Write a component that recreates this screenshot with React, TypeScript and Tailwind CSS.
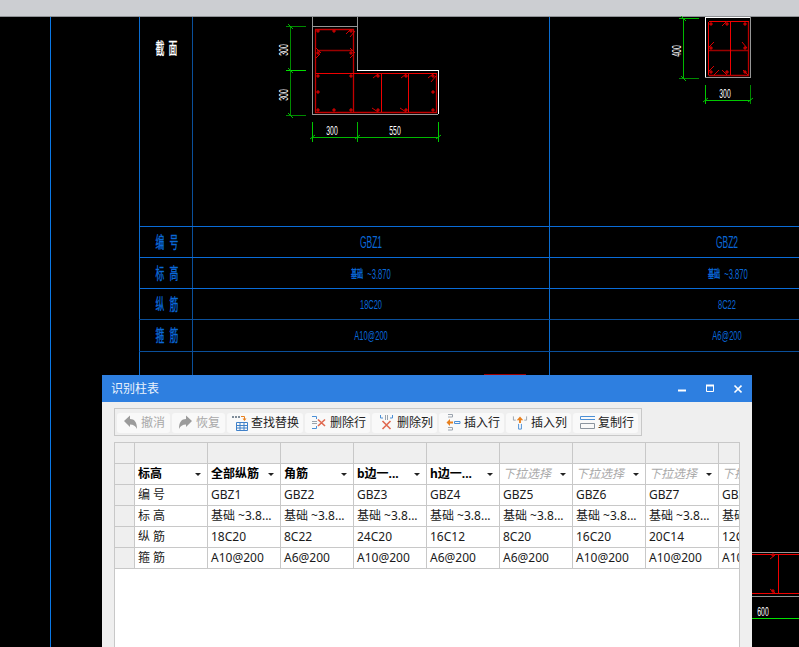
const CJK = "font-['Noto_Sans','Noto_Sans_CJK_SC',sans-serif]";

const rebarDots: [number, number][] = [
  [318, 31], [334, 31], [351, 31], [318, 53], [351, 53], [318, 76], [351, 76], [318, 92],
  [318, 110], [334, 110], [351, 110], [378, 76], [406, 76], [433, 76], [433, 92], [378, 110],
  [406, 110], [433, 110], [711, 24], [727, 24], [745, 24], [711, 48], [745, 48], [711, 72],
  [727, 72], [745, 72], [773, 555], [773, 591],
];

const rebarHooks: [number, number, number, number][] = [
  [346, 34, 351, 29], [350, 37, 355, 31], [316, 58, 320, 54], [316, 48, 321, 53], [350, 58, 354, 54],
  [350, 48, 355, 53], [373, 78, 378, 74], [401, 78, 406, 74], [428, 78, 433, 74], [431, 82, 436, 76],
  [372, 108, 378, 112], [400, 108, 406, 112], [722, 26, 727, 21], [709, 47, 714, 42], [742, 42, 747, 48],
  [709, 71, 714, 66], [714, 75, 719, 70], [722, 70, 727, 75], [743, 70, 748, 75], [770, 559, 775, 555],
  [770, 589, 775, 593],
];

// narrow CAD lettering, squeezed like the drawing's shx font
function CadText({ x, y, text, size = 12.5, sx = 0.55, rotate = 0, className = "fill-white" }: {
  x: number; y: number; text: string; size?: number; sx?: number; rotate?: number; className?: string;
}) {
  return (
    <text
      transform={`translate(${x} ${y}) rotate(${rotate}) scale(${sx} 1)`}
      textAnchor="middle"
      fontSize={size}
      className={`${className} font-['Liberation_Sans','Noto_Sans_CJK_SC',sans-serif]`}
    >
      {text}
    </text>
  );
}

function CadDrawing() {
  const blue = "fill-[#0a68d8]";
  const blueBold = "fill-[#0a68d8] stroke-[#0a68d8] [stroke-width:0.4px]";
  const whiteBold = "fill-white stroke-white [stroke-width:0.4px]";
  return (
    <svg className="absolute left-0 top-0" width="799" height="647" viewBox="0 0 799 647" fill="none" shapeRendering="crispEdges">
      {/* frame lines */}
      <g strokeWidth="1">
        <path d="M50.5 17V647" stroke="#0a78e6" />
        <path d="M139.500 17V375" stroke="#0a6cd0" />
        <path d="M192.500 17V375" stroke="#0a4f9a" />
        <path d="M549.500 17V375" stroke="#0a6cd0" />
        <path d="M139 226.500H799M139 257.500H799M139 288.500H799" stroke="#0a6cd8" />
        <path d="M139 319.500H799M139 351.500H799" stroke="#0a4f9a" />
      </g>

      {/* L shaped column outline */}
      <path d="M312.500 17V114.500H438M312 26.500H357.500M357.500 17V70" stroke="#969696" strokeWidth="1" />
      <path d="M357 70.500H438.500V114" stroke="#ffffff" strokeWidth="1" />
      <g shapeRendering="auto">
        <path d="M315.500 29V112.500H436.500V73.500M315 29.500H353.500V112" stroke="#c40000" strokeWidth="1.300" />
        <path d="M317 50.500H353" stroke="#9a0000" strokeWidth="1.500" />
        <path d="M708.500 75.500H748.500V21.500" stroke="#b80000" strokeWidth="1.300" />
        <path d="M709 50.500H748" stroke="#9a0000" strokeWidth="1.500" />
      </g>
      <path d="M315.500 73.500H436.500M381.500 74V112M408.500 74V112" stroke="#f00000" strokeWidth="1" />

      {/* rectangular column outline */}
      <path d="M705.500 77V17.500H750" stroke="#ffffff" strokeWidth="1" />
      <path d="M705 77.500H750.500V17" stroke="#969696" strokeWidth="1" />
      <path d="M708.500 21.500H748.500M730.500 22V75M708.500 21.500V75" stroke="#f00000" strokeWidth="1" />

      {/* bit of the next column, right of the dialog */}
      <path d="M752 552.500H799M752 596.500H799" stroke="#969696" strokeWidth="1" />
      <path d="M752 554.500H799M752 593.500H799M778.500 554V593" stroke="#f00000" strokeWidth="1" />
      <path d="M752 618.500H799" stroke="#00e000" strokeWidth="1" />
      <path d="M484 374.500H526" stroke="#a00000" strokeWidth="1" />

      <g shapeRendering="auto" stroke="#d80000" strokeWidth="1">
        {rebarDots.map(([cx, cy]) => (
          <circle key={`${cx}-${cy}`} cx={cx} cy={cy} r="1.200" fill="#900000" />
        ))}
        {rebarHooks.map(([x1, y1, x2, y2]) => (
          <line key={`${x1}-${y1}`} x1={x1} y1={y1} x2={x2} y2={y2} />
        ))}
      </g>

      {/* dimensions */}
      <g strokeWidth="1">
        <path d="M290.500 26V115M286 26.500H306M286 115.500H306" stroke="#008a00" />
        <path d="M286 70.500H306" stroke="#00e000" />
        <path d="M312 137.500H438M357.500 122V142" stroke="#00b800" />
        <path d="M312.500 122V142M438.500 122V142" stroke="#00c800" />
        <path d="M683.500 18V78M679 18.500H699" stroke="#00b800" />
        <path d="M679 78.500H699" stroke="#008a00" />
        <path d="M705 100.500H750M705.500 85V104" stroke="#00c800" />
        <path d="M750.500 85V104" stroke="#008a00" />
      </g>
      <g shapeRendering="auto" stroke="#00c000" strokeWidth="1">
        <path d="M288 24L293 29M288 68L293 73M288 113L293 118M310 139L315 135M355 139L360 135M436 139L441 135M681 16L686 21M681 76L686 81M703 102L708 98M748 102L753 98" />
      </g>
      <CadText x={288} y={50} text="300" rotate={-90} />
      <CadText x={288} y={95} text="300" rotate={-90} />
      <CadText x={332} y={135} text="300" />
      <CadText x={395} y={135} text="550" />
      <CadText x={681} y={51} text="400" rotate={-90} />
      <CadText x={725} y={98} text="300" />
      <CadText x={763} y={616} text="600" />

      {/* table labels */}
      <CadText x={160} y={54} text="截" size={16} sx={0.55} className={whiteBold} />
      <CadText x={173} y={54} text="面" size={16} sx={0.55} className={whiteBold} />
      {[
        ["编", "号", 248],
        ["标", "高", 279],
        ["纵", "筋", 310],
        ["箍", "筋", 341],
      ].map(([a, b, y]) => (
        <g key={String(y)}>
          <CadText x={160} y={Number(y)} text={String(a)} size={16} sx={0.55} className={blueBold} />
          <CadText x={174} y={Number(y)} text={String(b)} size={16} sx={0.55} className={blueBold} />
        </g>
      ))}
      <CadText x={371} y={248} text="GBZ1" size={17} sx={0.5} className={blue} />
      <CadText x={727} y={248} text="GBZ2" size={17} sx={0.5} className={blue} />
      <CadText x={357} y={278} text="基础" size={11} sx={0.55} className={blueBold} />
      <CadText x={379} y={279} text="~3.870" size={14} sx={0.55} className={blue} />
      <CadText x={714} y={278} text="基础" size={11} sx={0.55} className={blueBold} />
      <CadText x={736} y={279} text="~3.870" size={14} sx={0.55} className={blue} />
      <CadText x={371} y={309} text="18C20" size={12.5} sx={0.6} className={blue} />
      <CadText x={727} y={309} text="8C22" size={12.5} sx={0.6} className={blue} />
      <CadText x={371} y={340} text="A10@200" size={12.5} sx={0.6} className={blue} />
      <CadText x={727} y={340} text="A6@200" size={12.5} sx={0.6} className={blue} />
    </svg>
  );
}

const UndoIcon = ({ flip = false }: { flip?: boolean }) => (
  <svg width="15" height="15" viewBox="0 0 15 15" className={flip ? "-scale-x-100" : ""}>
    <path d="M1 6 7 .5V4c4.500 0 7 3 7 10-1.300-3-3.500-4.500-7-4.500V12z" fill="#9b9b9b" />
  </svg>
);

const ReplaceIcon = () => (
  <svg width="16" height="16" viewBox="0 0 16 16" fill="none">
    <path d="M0 1h2v2H0zM3 1h2v2H3zM6 1h2v2H6z" fill="#7f8c99" />
    <path d="M9 1.500h3.500V4" stroke="#e8801e" />
    <path d="M10.500 3.500h4l-2 2.500z" fill="#e8801e" />
    <path d="M4.500 7.500h11v8h-11zM4.500 10.500h11M4.500 13h11M8 8v7M12 8v7" stroke="#3f80c8" />
  </svg>
);

const DeleteRowIcon = () => (
  <svg width="15" height="15" viewBox="0 0 15 15" fill="none">
    <path d="M0 1.500H4.500V4M0 13.500H4.500V11" stroke="#4b8fd6" />
    <path d="M0 6.500h5M0 8.500h5" stroke="#9aa3ad" />
    <path d="M6 4.500 13 11M13 4.500 6 11" stroke="#e0684f" strokeWidth="1.600" />
  </svg>
);

const DeleteColIcon = () => (
  <svg width="15" height="15" viewBox="0 0 15 15" fill="none">
    <path d="M1.500 0v3H4M13.500 0v3H11" stroke="#4b8fd6" />
    <path d="M6.500 0v5M8.500 0v5" stroke="#9aa3ad" />
    <path d="M3.500 6 11.500 14M11.500 6 3.500 14" stroke="#e0684f" strokeWidth="1.600" />
  </svg>
);

const InsertRowIcon = () => (
  <svg width="15" height="17" viewBox="0 0 15 17" fill="none">
    <path d="M2 .5h4.500V3H2M2 13.500h4.500V16H2" stroke="#9aa3ad" />
    <path d="M3 8.500h4" stroke="#e8801e" strokeWidth="2" />
    <path d="M4 5v7L.5 8.500z" fill="#e8801e" />
    <path d="M8.500 7.500h5.500v2H8.500z" stroke="#4b8fd6" />
  </svg>
);

const InsertColIcon = () => (
  <svg width="17" height="15" viewBox="0 0 17 15" fill="none">
    <path d="M1.500 1v4H4M15.500 1v4H13" stroke="#9aa3ad" />
    <path d="M8.500 8V3" stroke="#e8801e" strokeWidth="2" />
    <path d="M5 5 8.500 1 12 5z" fill="#e8801e" />
    <path d="M7 9v5.500h3V9" stroke="#4b8fd6" />
  </svg>
);

const CopyRowIcon = () => (
  <svg width="15" height="13" viewBox="0 0 15 13" fill="none">
    <path d="M15 .5H.5v3H15" stroke="#4b8fd6" />
    <path d="M.5 7.500h14v5H.5z" stroke="#8b949e" />
  </svg>
);

const tools = [
  { label: "撤消", icon: <UndoIcon />, width: "w-[53px] pl-[5px]", muted: true },
  { label: "恢复", icon: <UndoIcon flip />, width: "w-[53px] pl-[5px]", muted: true },
  { label: "查找替换", icon: <ReplaceIcon />, width: "w-[76px] pl-[5px]" },
  { label: "删除行", icon: <DeleteRowIcon />, width: "w-[65px] pl-[6px]" },
  { label: "删除列", icon: <DeleteColIcon />, width: "w-[65px] pl-[6px]" },
  { label: "插入行", icon: <InsertRowIcon />, width: "w-[65px] pl-[6px]" },
  { label: "插入列", icon: <InsertColIcon />, width: "w-[65px] pl-[6px]" },
  { label: "复制行", icon: <CopyRowIcon />, width: "w-[65px] pl-[6px]" },
];

const headers = ["标高", "全部纵筋", "角筋", "b边一...", "h边一...", "下拉选择", "下拉选择", "下拉选择", "下拉选择"];

const rows = [
  ["编 号", "GBZ1", "GBZ2", "GBZ3", "GBZ4", "GBZ5", "GBZ6", "GBZ7", "GBZ8"],
  ["标 高", "基础 ~3.8...", "基础 ~3.8...", "基础 ~3.8...", "基础 ~3.8...", "基础 ~3.8...", "基础 ~3.8...", "基础 ~3.8...", "基础 ~3.8..."],
  ["纵 筋", "18C20", "8C22", "24C20", "16C12", "8C20", "16C20", "20C14", "12C14"],
  ["箍 筋", "A10@200", "A6@200", "A10@200", "A6@200", "A6@200", "A10@200", "A10@200", "A10@200"],
];

const cell = "h-[21px] border-b border-r border-[#c8c8c8] overflow-hidden whitespace-nowrap pl-[3px] leading-[20px]";

function ColumnTable() {
  return (
    <div className="h-[230px] w-[626px] shrink-0 overflow-hidden border-x border-t border-[#c8c8c8] bg-white">
      <div className="grid w-[677px] grid-cols-[20px_repeat(9,73px)] text-[12px] text-[#1a1a1a]">
        <div className={`${cell} bg-[#efefef]`} />
        {headers.map((_, i) => (
          <div key={i} className={`${cell} bg-[#efefef]`} />
        ))}

        <div className={`${cell} bg-[#efefef]`} />
        {headers.map((h, i) => (
          <div key={i} className={`${cell} relative ${h === "下拉选择" ? "font-normal italic text-[#aaaaaa]" : "font-bold text-black"}`}>
            {h}
            <span className="absolute right-[6px] top-[9px] h-0 w-0 border-x-[3px] border-t-[3px] border-x-transparent border-t-[#222222]" />
          </div>
        ))}

        {rows.map((row) => (
          <div key={row[0]} className="contents">
            <div className={`${cell} bg-[#efefef]`} />
            {row.map((v, i) => (
              <div key={i} className={cell}>{v}</div>
            ))}
          </div>
        ))}
      </div>
    </div>
  );
}

export default function App() {
  return (
    <div className={`relative h-[647px] w-[799px] overflow-hidden bg-black ${CJK}`}>
      <div className="h-[17px] border-b border-[#8f9296] bg-[#ccced2]" />
      <CadDrawing />

      {/* dialog window */}
      <div className="absolute left-[102px] top-[375px] flex h-[272px] w-[650px] flex-col bg-[#efefef]">
        <div className="flex h-[27px] shrink-0 items-center justify-between bg-[#2e7fe0] pl-[9px] text-[12px] text-[#eaf2fc]">
          <span>识别柱表</span>
          <div className="flex items-center">
            <svg width="64" height="27" viewBox="0 0 64 27" fill="none" stroke="#ffffff" className="mr-[10px]">
              <path d="M0 15.500h8" strokeWidth="2" />
              <path d="M28.500 10.500h7v6h-7z" />
              <path d="M28 10.500h8" strokeWidth="2" />
              <path d="M56.500 10.500 63.500 17.500M63.500 10.500 56.500 17.500" strokeWidth="1.600" />
            </svg>
          </div>
        </div>

        <div className="flex flex-col gap-[6px] px-[12px] pt-[6px]">
          <div className="flex h-[28px] w-[528px] items-center gap-[2px] border border-[#c8c8c8] px-[2px] pt-px">
            {tools.map((t) => (
              <div
                key={t.label}
                className={`flex h-[20px] ${t.width} items-center gap-[3px] rounded-[3px] bg-[#f9f9f9] text-[12px] ${t.muted ? "text-[#a8a8a8]" : "text-[#222222]"}`}
              >
                <span className="flex w-[16px] shrink-0 items-center justify-center">{t.icon}</span>
                <span>{t.label}</span>
              </div>
            ))}
          </div>
          <ColumnTable />
        </div>
      </div>
    </div>
  );
}
